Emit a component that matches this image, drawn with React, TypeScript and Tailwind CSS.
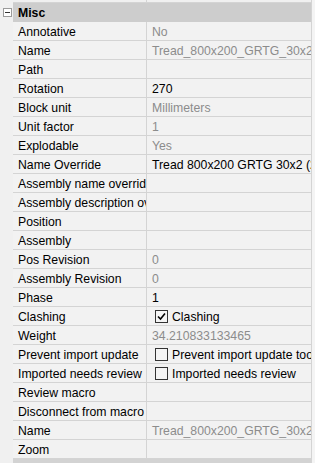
const rows: { label: string; value?: string; dim?: boolean; check?: boolean; checked?: boolean }[] = [
  { label: "Annotative", value: "No", dim: true },
  { label: "Name", value: "Tread_800x200_GRTG_30x2_(2)", dim: true },
  { label: "Path" },
  { label: "Rotation", value: "270" },
  { label: "Block unit", value: "Millimeters", dim: true },
  { label: "Unit factor", value: "1", dim: true },
  { label: "Explodable", value: "Yes", dim: true },
  { label: "Name Override", value: "Tread 800x200 GRTG 30x2 (2)" },
  { label: "Assembly name override" },
  { label: "Assembly description override" },
  { label: "Position" },
  { label: "Assembly" },
  { label: "Pos Revision", value: "0", dim: true },
  { label: "Assembly Revision", value: "0", dim: true },
  { label: "Phase", value: "1" },
  { label: "Clashing", value: "Clashing", check: true, checked: true },
  { label: "Weight", value: "34.210833133465", dim: true },
  { label: "Prevent import update", value: "Prevent import update tool", check: true },
  { label: "Imported needs review", value: "Imported needs review", check: true },
  { label: "Review macro" },
  { label: "Disconnect from macro" },
  { label: "Name", value: "Tread_800x200_GRTG_30x2_(2)", dim: true },
  { label: "Zoom" },
];

const Check = ({ checked }: { checked?: boolean }) => (
  <span className="shrink-0 w-[13px] h-[13px] -mt-[2px] border border-[#333333] bg-[#f4f4f4] flex items-center justify-center">
    {checked && (
      <svg width="9" height="9" viewBox="0 0 9 9">
        <path d="M1 4.5 L3.5 7 L8 1.5" fill="none" stroke="#000" strokeWidth="1.6" />
      </svg>
    )}
  </span>
);

export default function App() {
  return (
    <div
      className="w-[315px] h-[463px] bg-[#f0f0f0] flex overflow-hidden text-[12.25px] text-black"
      style={{ fontFamily: '"Liberation Sans", Arial, sans-serif' }}
    >
      <div className="w-[13px] shrink-0 pt-[8px] pl-[3px]">
        <div className="w-[9px] h-[9px] border border-[#9a9a9a] bg-white flex items-center justify-center">
          <div className="w-[5px] h-px bg-[#333]" />
        </div>
      </div>
      <div className="w-[299px] shrink-0 flex flex-col border-r border-[#d4d4d4]">
        <div className="h-[3px] flex border-b border-[#d4d4d4]">
          <div className="w-[134px] border-r border-[#d4d4d4]" />
        </div>
        <div className="h-[19px] bg-[#cdcdcd] flex items-center pl-[5px] pt-[2px] font-bold">Misc</div>
        {rows.map((r, i) => (
          <div key={i} className="h-[19px] flex border-b border-[#d4d4d4] bg-[#f2f2f2]">
            <div className="w-[134px] shrink-0 border-r border-[#d4d4d4] pl-[5px] pt-[2px] flex items-center overflow-hidden whitespace-nowrap">
              {r.label}
            </div>
            <div
              className={`flex-1 min-w-0 flex items-center pt-[2px] overflow-hidden whitespace-nowrap ${
                r.check ? "pl-[8px] gap-[4px]" : "pl-[5px]"
              } ${r.dim ? "text-[#8c8c8c]" : ""}`}
            >
              {r.check && <Check checked={r.checked} />}
              {r.value}
            </div>
          </div>
        ))}
        <div className="flex-1 bg-[#d3d3d3]" />
      </div>
      <div className="flex-1 bg-[#f4f4f4]" />
    </div>
  );
}
